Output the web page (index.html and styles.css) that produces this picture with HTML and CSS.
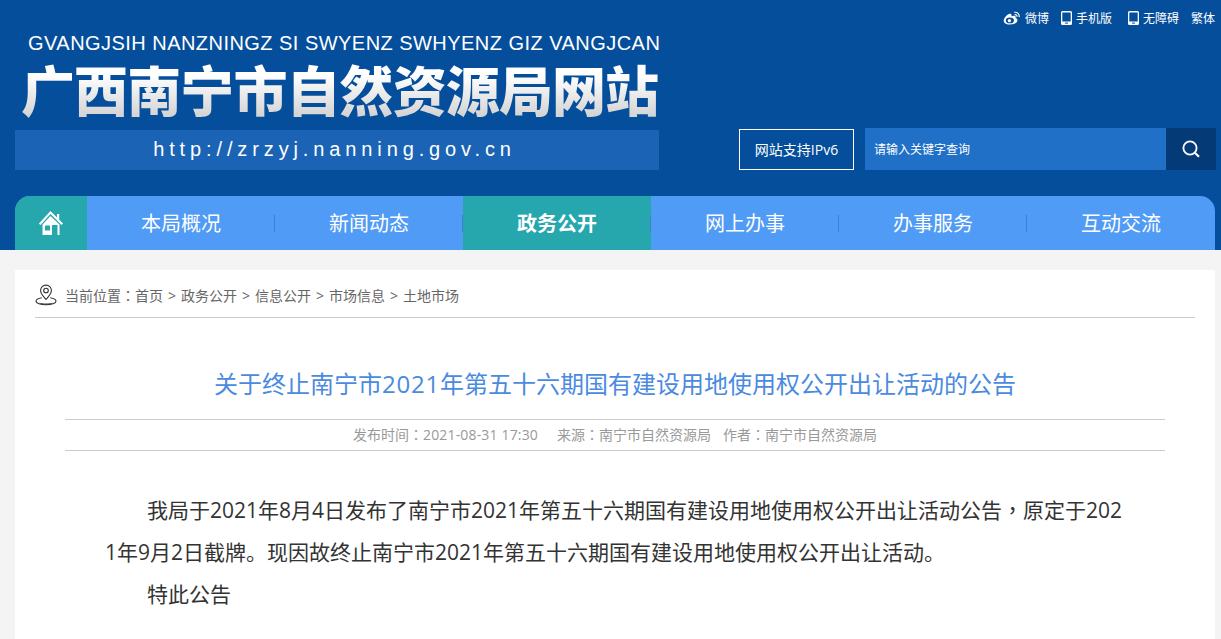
FILE: index.html
```html
<!DOCTYPE html>
<html lang="zh-CN">
<head>
<meta charset="utf-8">
<title>广西南宁市自然资源局网站</title>
<link rel="stylesheet" href="styles.css">
</head>
<body>
<header class="header">
  <div class="topbar">
    <a class="top-link"><svg class="ic-weibo" viewBox="0 0 20 16"><path fill="#fff" d="M8 15.500c-3.900 0-7.500-1.700-7.500-4.500C.5 8.700 3.400 4.700 6.500 3.400c1.800-.7 3-.2 3 1.600 0 .6-.1.900.2.900 1.600-.7 4.600-1 4.600 1 0 .5-.2.900-.4 1.200 1.500.4 2.300 1.300 2.300 2.600 0 2.800-3.800 4.800-8.200 4.800z"/><ellipse cx="7.600" cy="10.800" rx="4.600" ry="3.300" fill="#054e9c"/><circle cx="7" cy="11" r="1.900" fill="#fff"/><path fill="none" stroke="#fff" stroke-width="1.300" d="M12.500 1.500c3.500-.6 6.200 2 5.700 5.500M13 4.200c1.700-.3 3 .9 2.700 2.600"/></svg>微博</a>
    <a class="top-link"><svg class="ic-phone" viewBox="0 0 11 14"><path fill="#fff" d="M1.500 0h8A1.500 1.500 0 0 1 11 1.500v11A1.500 1.500 0 0 1 9.500 14h-8A1.500 1.500 0 0 1 0 12.500v-11A1.500 1.500 0 0 1 1.500 0zM1.300 1.500v9h8.400v-9z"/><rect x="4" y="11.600" width="3" height="1" fill="#054e9c"/></svg>手机版</a>
    <a class="top-link top-link-wide"><svg class="ic-phone" viewBox="0 0 11 14"><path fill="#fff" d="M1.500 0h8A1.500 1.500 0 0 1 11 1.500v11A1.500 1.500 0 0 1 9.500 14h-8A1.500 1.500 0 0 1 0 12.500v-11A1.500 1.500 0 0 1 1.500 0zM1.300 1.500v9h8.400v-9z"/><rect x="4" y="11.600" width="3" height="1" fill="#054e9c"/></svg>无障碍</a>
    <a class="top-link">繁体</a>
  </div>
  <div class="brand-row">
    <div class="brand">
      <div class="roman">GVANGJSIH NANZNINGZ SI SWYENZ SWHYENZ GIZ VANGJCAN</div>
      <div class="site-name">广西南宁市自然资源局网站</div>
      <div class="url-bar">http://zrzyj.nanning.gov.cn</div>
    </div>
    <div class="tools">
      <div class="ipv6">网站支持IPv6</div>
      <div class="search">
        <div class="search-input">请输入关键字查询</div>
        <div class="search-btn"><svg viewBox="0 0 20 20"><circle cx="9" cy="9" r="6.600" fill="none" stroke="#fff" stroke-width="1.800"/><path d="M13.800 13.800l4.200 4" stroke="#fff" stroke-width="2.200" fill="none"/></svg></div>
      </div>
    </div>
  </div>
  <nav class="nav">
    <a class="nav-home"><svg viewBox="0 0 24 24"><path fill="none" stroke="#fff" stroke-width="2" d="M.7 13.300L11.500 1.500 23.300 13.300"/><rect x="18" y="3" width="2.200" height="6" fill="#fff"/><path fill="#fff" fill-rule="evenodd" d="M3.500 24V13.500L11.500 5l9 8.500V24h-2v-10h-5.500v10zM6 14.500v5h5v-5z"/></svg></a>
    <a class="nav-item">本局概况</a>
    <a class="nav-item">新闻动态</a>
    <a class="nav-item active">政务公开</a>
    <a class="nav-item">网上办事</a>
    <a class="nav-item">办事服务</a>
    <a class="nav-item">互动交流</a>
  </nav>
</header>
<main class="card">
  <div class="crumbs">
    <svg class="ic-pin" viewBox="0 0 22 22"><g fill="none" stroke="#333" stroke-width="1.100"><path d="M11 15.500C8 12 5.600 9.800 5.600 6.500a5.400 5.400 0 0 1 10.800 0c0 3.300-2.400 5.500-5.400 9z"/><circle cx="11" cy="6.500" r="2.300"/><path d="M6.800 13.800C3 14.500 1 15.800 1 17.200c0 2 4.500 3.600 10 3.600s10-1.600 10-3.600c0-1.400-2-2.700-5.800-3.400"/></g><path d="M4 18.500c2 1.400 12 1.400 14 0-2 3-12 3-14 0z" fill="#333"/></svg>
    <span>当前位置<span class="punct" lang="zh-TW">：</span>首页<span class="sep">&gt;</span>政务公开<span class="sep">&gt;</span>信息公开<span class="sep">&gt;</span>市场信息<span class="sep">&gt;</span>土地市场</span>
  </div>
  <h1 class="title">关于终止南宁市<span class="num">2021</span>年第五十六期国有建设用地使用权公开出让活动的公告</h1>
  <div class="meta"><span class="meta-time">发布时间<span class="punct" lang="zh-TW">：</span><span class="num">2021-08-31 17:30</span></span><span class="meta-src">来源<span class="punct" lang="zh-TW">：</span>南宁市自然资源局</span><span>作者<span class="punct" lang="zh-TW">：</span>南宁市自然资源局</span></div>
  <div class="article">
    <p>我局于2021年8月4日发布了南宁市2021年第五十六期国有建设用地使用权公开出让活动公告<span class="punct" lang="zh-TW">，</span>原定于2021年9月2日截牌。现因故终止南宁市2021年第五十六期国有建设用地使用权公开出让活动。</p>
    <p>特此公告</p>
  </div>
</main>
</body>
</html>
```
FILE: styles.css
```css
* { box-sizing: border-box; }
html, body { margin: 0; padding: 0; }
body {
  width: 1221px;
  height: 639px;
  overflow: hidden;
  background: #f4f4f4;
  font-family: "Open Sans", "Noto Sans CJK SC", "Liberation Sans", sans-serif;
}
.punct { font-family: "Noto Sans CJK TC", sans-serif; }
.num { letter-spacing: 0.012em; }
.header {
  height: 250px;
  background: #054e9c;
  display: flex;
  flex-direction: column;
  padding: 0 5px 0 15px;
}
.topbar {
  height: 33px;
  padding: 3px 1px 0 0;
  display: flex;
  justify-content: flex-end;
  align-items: center;
  gap: 12px;
  color: #fff;
  font-size: 12px;
}
.top-link { display: flex; align-items: center; gap: 4px; }
.top-link-wide { margin-left: 4px; }
.ic-weibo { width: 18px; height: 14px; }
.ic-phone { width: 11px; height: 14px; }
.brand-row { display: flex; height: 137px; }
.brand { width: 644px; display: flex; flex-direction: column; }
.roman {
  font-family: "Liberation Sans", sans-serif;
  color: #fff;
  font-size: 20px;
  line-height: 20px;
  height: 20px;
  margin-left: 13px;
  white-space: nowrap;
  letter-spacing: 0.46px;
}
.site-name {
  font-family: "Noto Sans CJK SC", sans-serif;
  font-size: 54px;
  font-weight: 900;
  letter-spacing: -0.9px;
  line-height: 64px;
  height: 73px;
  margin: 4px 0 0 6px;
  white-space: nowrap;
  background: linear-gradient(#ffffff 25%, #d4d4d4 80%);
  -webkit-background-clip: text;
  background-clip: text;
  color: transparent;
}
.url-bar {
  height: 40px;
  background: #1b64b5;
  color: #fff;
  font-family: "Liberation Sans", sans-serif;
  font-size: 20px;
  letter-spacing: 4.88px;
  line-height: 38px;
  text-align: center;
  padding-right: 5px;
}
.tools {
  display: flex;
  align-items: flex-end;
  margin-left: 80px;
  gap: 11px;
}
.ipv6 {
  width: 115px;
  height: 41px;
  border: 1px solid #fff;
  color: #fff;
  font-size: 14px;
  line-height: 39px;
  text-align: center;
}
.search { display: flex; height: 42px; }
.search-input {
  width: 301px;
  background: #2070c8;
  color: #fff;
  font-size: 12px;
  line-height: 44px;
  padding-left: 9px;
}
.search-btn {
  width: 50px;
  background: #043a76;
  display: flex;
  align-items: center;
  justify-content: center;
}
.search-btn svg { width: 20px; height: 20px; }
.nav {
  margin-top: 26px;
  height: 54px;
  width: 1200px;
  display: flex;
  background: #4f9bf5;
  border-radius: 15px 15px 0 0;
  overflow: hidden;
}
.nav-home {
  width: 72px;
  background: #26a7ae;
  display: flex;
  align-items: center;
  justify-content: center;
}
.nav-home svg { width: 24px; height: 24px; }
.nav-item {
  width: 188px;
  color: #fff;
  font-size: 20px;
  line-height: 56px;
  text-align: center;
  position: relative;
}
.nav-item::after {
  content: "";
  position: absolute;
  right: 0;
  top: 19px;
  height: 17px;
  width: 1px;
  background: #3f7fca;
}
.nav-item:last-child::after { display: none; }
.nav-item.active { background: #26a7ae; font-weight: 700; }
.card {
  margin: 20px 6px 0 15px;
  height: 369px;
  background: #fff;
  padding: 0 20px;
}
.crumbs {
  height: 48px;
  border-bottom: 1px solid #ccc;
  display: flex;
  align-items: center;
  gap: 8px;
  color: #666;
  font-size: 14px;
  padding-top: 3px;
  white-space: nowrap;
}
.sep { margin: 0 5px; }
.ic-pin { width: 22px; height: 22px; }
.title {
  margin: 0;
  padding: 0;
  height: 101px;
  font-size: 24px;
  font-weight: 400;
  line-height: 132px;
  color: #4a8ae0;
  text-align: center;
  white-space: nowrap;
  overflow: hidden;
}
.title .num { letter-spacing: 0.8px; }
.meta {
  margin: 0 30px;
  height: 32px;
  border-top: 1px solid #ccc;
  border-bottom: 1px solid #ccc;
  font-size: 14px;
  line-height: 28px;
  color: #999;
  text-align: center;
  white-space: nowrap;
}
.meta-time { margin-right: 19px; }
.meta-src { margin-right: 12px; }
.article {
  margin: 37px 70px 0;
  font-size: 21px;
  line-height: 42px;
  color: #333;
  word-break: break-all;
}
.article p { margin: 0; text-indent: 42px; }
```
